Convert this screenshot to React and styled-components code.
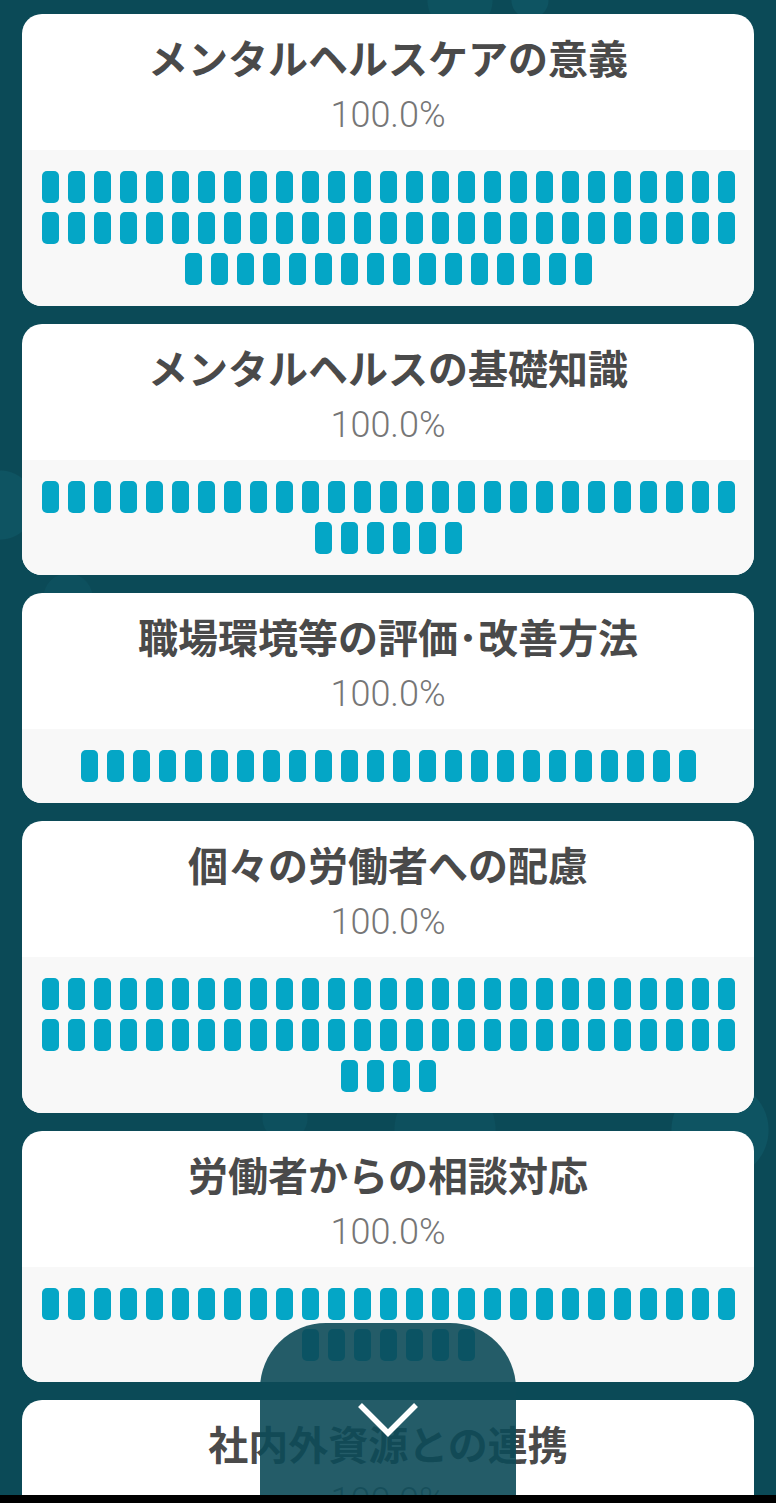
import React from "react";
import styled, { createGlobalStyle } from "styled-components";

const GlobalStyle = createGlobalStyle`
  html, body {
    margin: 0;
    padding: 0;
    background-color: #0b4a57;
    background-image:
      radial-gradient(circle at 0px 505px, #0e5462 0 34px, transparent 35px),
      radial-gradient(circle at 68px 598px, #0d505e 0 24px, transparent 25px),
      radial-gradient(circle at 285px 1118px, #0d505e 0 22px, transparent 23px),
      radial-gradient(circle at 445px 1130px, #0d505e 0 50px, transparent 51px),
      radial-gradient(circle at 720px 1130px, #0e5462 0 48px, transparent 49px),
      radial-gradient(circle at 460px 0px, #0d525f 0 32px, transparent 33px),
      radial-gradient(circle at 530px 0px, #0e5462 0 18px, transparent 19px);
    background-repeat: no-repeat;
    font-family: "Noto Sans CJK JP", "Noto Sans", sans-serif;
  }
`;

const Page = styled.div`
  display: flex;
  flex-direction: column;
  gap: 18px;
  padding: 14px 22px 40px;
`;

const Card = styled.section`
  background: #ffffff;
  border-radius: 20px;
  overflow: hidden;
`;

const Header = styled.div`
  display: flex;
  flex-direction: column;
  align-items: center;
  height: 136px;
  padding-top: 18px;
  box-sizing: border-box;
`;

const Title = styled.h2`
  margin: 0;
  font-family: "Noto Sans CJK JP", sans-serif;
  font-weight: 700;
  font-size: 40px;
  line-height: 50px;
  color: #4a4a4a;
`;

const Percent = styled.div`
  margin-top: 12px;
  font-family: Roboto, "Noto Sans", sans-serif;
  font-weight: 300;
  font-size: 36px;
  line-height: 42px;
  color: #767676;
`;

const Grid = styled.div`
  background: #f8f8f8;
  display: flex;
  flex-wrap: wrap;
  justify-content: center;
  gap: 9px;
  padding: 21px 19px;
`;

const Pill = styled.span`
  width: 17px;
  height: 32px;
  border-radius: 5px;
  background: #04a6c6;
`;

const Overlay = styled.div`
  position: fixed;
  left: 260px;
  bottom: 8px;
  width: 256px;
  height: 172px;
  border-radius: 66px 66px 0 0;
  background: rgba(12, 74, 88, 0.9);
  display: flex;
  justify-content: center;
  padding-top: 78px;
  box-sizing: border-box;
`;

const NavBar = styled.div`
  position: fixed;
  left: 0;
  right: 0;
  bottom: 0;
  height: 8px;
  background: #000;
`;

const items = [
  { title: "メンタルヘルスケアの意義", count: 70 },
  { title: "メンタルヘルスの基礎知識", count: 33 },
  { title: "職場環境等の評価･改善方法", count: 24 },
  { title: "個々の労働者への配慮", count: 58 },
  { title: "労働者からの相談対応", count: 34 },
  { title: "社内外資源との連携", count: 40 },
];

function ScoreCard({ title, count }) {
  return (
    <Card>
      <Header>
        <Title>{title}</Title>
        <Percent>100.0%</Percent>
      </Header>
      <Grid>
        {Array.from({ length: count }, (_, i) => (
          <Pill key={i} />
        ))}
      </Grid>
    </Card>
  );
}

export default function App() {
  return (
    <>
      <GlobalStyle />
      <Page>
        {items.map((it) => (
          <ScoreCard key={it.title} {...it} />
        ))}
      </Page>
      <Overlay>
        <svg width="64" height="36" viewBox="0 0 64 36">
          <polyline
            points="4,4 32,32 60,4"
            fill="none"
            stroke="#ffffff"
            strokeWidth="5.5"
          />
        </svg>
      </Overlay>
      <NavBar />
    </>
  );
}
